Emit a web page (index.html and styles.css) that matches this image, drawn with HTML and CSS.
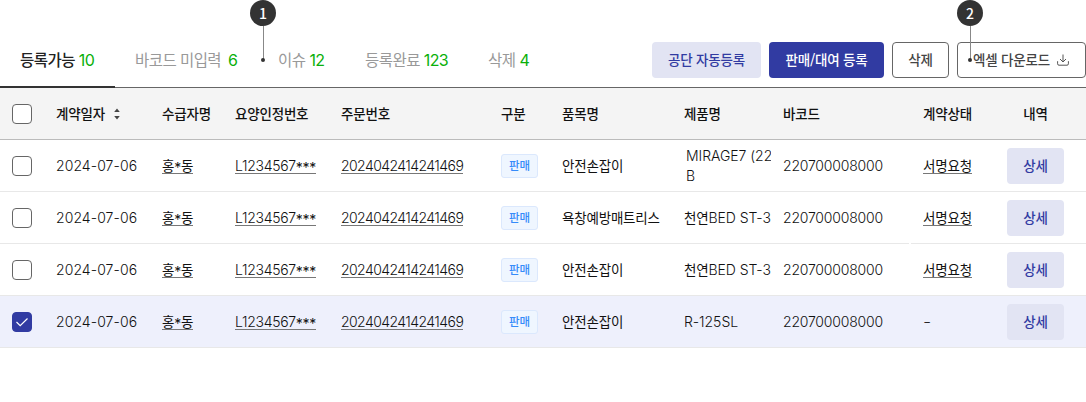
FILE: index.html
```html
<!DOCTYPE html>
<html lang="ko">
<head>
<meta charset="utf-8">
<title>계약 목록</title>
<link rel="stylesheet" href="styles.css">
</head>
<body>
<main class="page">
  <header class="toolbar">
    <nav class="tabs">
      <a class="tab tab-active">등록가능<b class="count">10</b></a>
      <a class="tab tab-barcode">바코드 미입력<b class="count">6</b></a>
      <a class="tab tab-issue">이슈<b class="count">12</b></a>
      <a class="tab tab-done">등록완료<b class="count">123</b></a>
      <a class="tab">삭제<b class="count">4</b></a>
    </nav>
    <div class="actions">
      <button class="btn btn-soft btn-auto">공단 자동등록</button>
      <button class="btn btn-primary">판매/대여 등록</button>
      <button class="btn btn-line btn-delete">삭제</button>
      <button class="btn btn-line btn-excel">엑셀 다운로드<svg class="download" viewBox="0 0 12 12"><path d="M6 .5v7.2M3 5l3 3 3-3M.6 7.2v2.6q0 1.4 1.4 1.4h8q1.4 0 1.4-1.4V7.2"/></svg></button>
    </div>
  </header>
  <section class="table">
    <div class="row head">
      <span class="check"></span>
      <span class="ko sort">계약일자<svg class="sort-icon" viewBox="0 0 6 12"><path d="M3 .5 5.8 4H.2zM3 11.5.2 8h5.6z"/></svg></span>
      <span class="ko">수급자명</span><span class="ko">요양인정번호</span><span class="ko">주문번호</span><span class="ko">구분</span><span class="ko">품목명</span><span class="ko">제품명</span><span class="ko">바코드</span><span class="ko">계약상태</span><span class="ko detail-head">내역</span>
    </div>
    <div class="row">
      <span class="check"></span><span class="date">2024-07-06</span><u class="link link-ko">홍<i class="star">*</i>동</u><u class="link care">L1234567<i class="star">***</i></u><u class="link order">2024042414241469</u><i class="tag">판매</i><span class="ko">안전손잡이</span><span class="product product-wrap">MIRAGE7 (22<br>B</span><span class="barcode">220700008000</span><u class="link link-ko">서명요청</u><button class="btn btn-soft btn-detail">상세</button>
    </div>
    <div class="row row-gap">
      <span class="check"></span><span class="date">2024-07-06</span><u class="link link-ko">홍<i class="star">*</i>동</u><u class="link care">L1234567<i class="star">***</i></u><u class="link order">2024042414241469</u><i class="tag">판매</i><span class="ko">욕창예방매트리스</span><span class="product">천연<em class="latin">BED ST-3</em></span><span class="barcode">220700008000</span><u class="link link-ko">서명요청</u><button class="btn btn-soft btn-detail">상세</button>
    </div>
    <div class="row">
      <span class="check"></span><span class="date">2024-07-06</span><u class="link link-ko">홍<i class="star">*</i>동</u><u class="link care">L1234567<i class="star">***</i></u><u class="link order">2024042414241469</u><i class="tag">판매</i><span class="ko">안전손잡이</span><span class="product">천연<em class="latin">BED ST-3</em></span><span class="barcode">220700008000</span><u class="link link-ko">서명요청</u><button class="btn btn-soft btn-detail">상세</button>
    </div>
    <div class="row row-selected">
      <span class="check check-on"><svg class="tick" viewBox="0 0 14 14"><path d="m1.5 7 3.7 3.7 7.3-7.2"/></svg></span><span class="date">2024-07-06</span><u class="link link-ko">홍<i class="star">*</i>동</u><u class="link care">L1234567<i class="star">***</i></u><u class="link order">2024042414241469</u><i class="tag">판매</i><span class="ko">안전손잡이</span><span class="product"><em class="latin">R-125SL</em></span><span class="barcode">220700008000</span><span class="dash">-</span><button class="btn btn-soft btn-detail">상세</button>
    </div>
  </section>
  <div class="marker marker-one"><span class="marker-badge">1</span></div>
  <div class="marker marker-two"><span class="marker-badge">2</span></div>
</main>
</body>
</html>
```
FILE: styles.css
```css
* { box-sizing: border-box; }
body {
  margin: 0;
  background: #fff;
  color: #111;
  font: 400 13.5px/20px "Noto Sans CJK KR", sans-serif;
  letter-spacing: -0.2px;
}
.page { position: relative; width: 1086px; height: 402px; overflow: hidden; }
.toolbar {
  display: flex;
  justify-content: space-between;
  height: 88px;
  padding-top: 34px;
  border-bottom: 1px solid #666;
}
.tabs { display: flex; height: 54px; }
.tab {
  display: flex;
  flex-shrink: 0;
  padding: 15px 0 0 20px;
  font-size: 15.5px;
  letter-spacing: -0.55px;
  color: #999;
  white-space: nowrap;
}
.tab-active { width: 115px; color: #222; font-weight: 500; border-bottom: 2px solid #333; }
.tab-barcode { width: 143px; }
.tab-issue { width: 87px; }
.tab-done { width: 123px; }
.count {
  margin-left: 4px;
  padding-top: 1px;
  font: 400 16px/20px Inter, sans-serif;
  letter-spacing: -0.7px;
  color: #0ab00a;
}
.tab-barcode .count { margin-left: 7px; }
.actions { display: flex; gap: 8px; padding-top: 8px; }
.btn {
  display: flex;
  align-items: center;
  justify-content: center;
  height: 36px;
  padding: 0 0 2px;
  border: 0;
  border-radius: 4px;
  font: 500 13.5px/20px "Noto Sans CJK KR", sans-serif;
  letter-spacing: -0.2px;
  white-space: nowrap;
}
.btn-soft { background: #e2e4f3; color: #313ba2; }
.btn-primary { width: 115px; background: #313ba2; color: #fff; }
.btn-line { border: 1px solid #666; background: #fff; color: #444; }
.btn-auto { width: 109px; }
.btn-delete { width: 57px; }
.btn-excel { width: 129px; gap: 7px; padding-right: 1px; }
.btn-detail { width: 57px; }
.download { width: 12px; height: 12px; margin-top: 2px; fill: none; stroke: #555; stroke-width: 1; }
.row {
  position: relative;
  display: grid;
  grid-template-columns: 44px 106px 73px 106px 160px 61px 122px 99px 140px 84px 57px;
  align-items: center;
  height: 52px;
  padding-left: 12px;
  border-bottom: 1px solid #e8e8e8;
  white-space: nowrap;
}
.head { background: #f4f4f4; border-color: #bbb; font-weight: 500; }
.row-selected { background: #eef0fc; }
.row-gap::after {
  content: "";
  position: absolute;
  left: 909px;
  bottom: -1px;
  width: 2px;
  height: 1px;
  background: #fff;
}
.check {
  display: flex;
  align-items: center;
  justify-content: center;
  width: 20px;
  height: 20px;
  border: 1px solid #666;
  border-radius: 4px;
  background: #fff;
}
.check-on { background: #313ba2; border-color: #313ba2; }
.tick { flex-shrink: 0; width: 14px; height: 14px; fill: none; stroke: #fff; stroke-width: 1.2; }
.ko { padding-bottom: 2px; }
.sort { display: flex; align-items: center; gap: 9px; }
.sort-icon { width: 6px; height: 12px; margin-top: 2px; fill: #444; }
.detail-head { text-align: center; }
.date, .care, .order, .barcode, .latin, .product-wrap, .dash {
  font-family: Inter, sans-serif;
  font-size: 14px;
  font-style: normal;
  font-weight: 300;
}
.date { letter-spacing: 0.08px; }
.care { letter-spacing: -0.3px; }
.order { letter-spacing: -0.56px; }
.barcode { letter-spacing: -0.2px; }
.latin, .product-wrap { letter-spacing: -0.05px; }
.dash { transform: scaleX(1.3); transform-origin: left; }
.link {
  width: fit-content;
  height: 15px;
  margin-top: 2px;
  line-height: 14px;
  border-bottom: 1px solid #777;
  text-decoration: none;
}
.link-ko { line-height: 12px; }
.star {
  display: inline-block;
  font: 400 14px/10px Inter, sans-serif;
  vertical-align: -2px;
}
.tag {
  display: flex;
  align-items: center;
  justify-content: center;
  width: 37px;
  height: 24px;
  padding-bottom: 1px;
  border: 1px solid #dbe8fd;
  border-radius: 3px;
  background: #eff6ff;
  color: #358bfa;
  font-size: 11.5px;
  font-style: normal;
  font-weight: 500;
}
.product { width: 87px; overflow: hidden; }
.product-wrap { padding-left: 2px; }
.marker {
  position: absolute;
  top: 0;
  width: 26px;
  height: 62px;
  background: linear-gradient(#888, #888) center 26px / 1px 34px no-repeat;
}
.marker::after {
  content: "";
  position: absolute;
  left: 11px;
  top: 58px;
  width: 4px;
  height: 4px;
  border-radius: 50%;
  background: #333;
}
.marker-one { left: 250px; }
.marker-two { left: 957px; }
.marker-badge {
  display: flex;
  align-items: center;
  justify-content: center;
  width: 26px;
  height: 26px;
  padding-bottom: 1px;
  border-radius: 50%;
  background: #333;
  color: #fff;
  font: 500 14px/20px "Noto Sans CJK KR", sans-serif;
  letter-spacing: 0;
}
```
